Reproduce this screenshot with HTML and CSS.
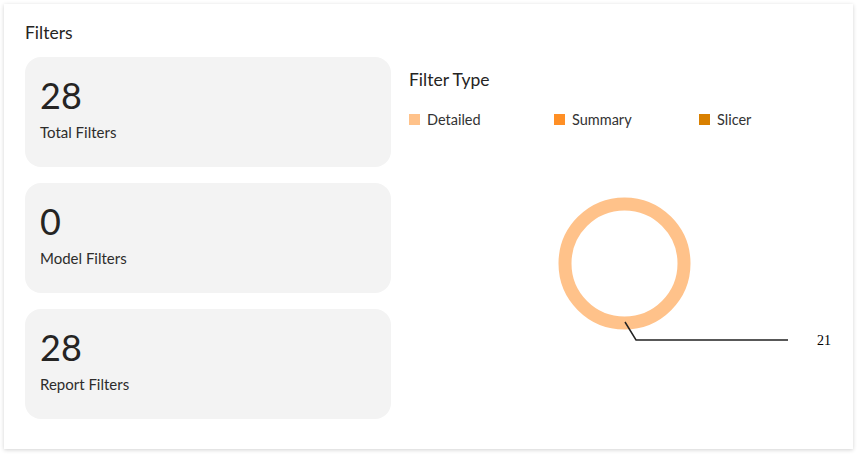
FILE: index.html
```html
<!DOCTYPE html>
<html>
<head>
<meta charset="utf-8">
<link rel="stylesheet" href="styles.css">
</head>
<body>
<div class="panel">
  <h2 class="panel-title">Filters</h2>
  <div class="panel-body">
    <div class="stats">
      <div class="stat">
        <div class="stat-value">28</div>
        <div class="stat-label">Total Filters</div>
      </div>
      <div class="stat">
        <div class="stat-value">0</div>
        <div class="stat-label">Model Filters</div>
      </div>
      <div class="stat">
        <div class="stat-value">28</div>
        <div class="stat-label">Report Filters</div>
      </div>
    </div>
    <div class="chart">
      <div class="chart-title">Filter Type</div>
      <div class="legend">
        <div class="legend-item"><span class="swatch detailed"></span>Detailed</div>
        <div class="legend-item"><span class="swatch summary"></span>Summary</div>
        <div class="legend-item"><span class="swatch slicer"></span>Slicer</div>
      </div>
      <svg class="donut" width="444" height="270" viewBox="0 0 444 270">
        <circle cx="215.5" cy="113.5" r="59.5" fill="none" stroke="#ffc28a" stroke-width="13"/>
        <polyline points="216,172 227,190 379,190" fill="none" stroke="#222" stroke-width="1.5"/>
        <text x="408" y="195" class="donut-label">21</text>
      </svg>
    </div>
  </div>
</div>
</body>
</html>
```
FILE: styles.css
```css
html, body {
  margin: 0;
  padding: 0;
  background: #ffffff;
}
body {
  padding: 4px 10px 10px 4px;
  font-family: "Lato", "Open Sans", sans-serif;
  color: #252423;
}
.panel {
  width: 849px;
  height: 445px;
  box-sizing: border-box;
  background: #fff;
  box-shadow: 0 1px 4px rgba(0,0,0,0.18);
  padding: 17px 0 0 21px;
}
.panel-title {
  margin: 0;
  font-size: 17.5px;
  font-weight: 400;
  line-height: 24px;
  color: #252423;
}
.panel-body {
  display: flex;
  gap: 18px;
  margin-top: 12px;
}
.stats {
  display: flex;
  flex-direction: column;
  gap: 16px;
  width: 367px;
}
.stat {
  height: 110px;
  box-sizing: border-box;
  background: #f3f3f3;
  border-radius: 16px;
  padding: 18px 16px 0 15px;
}
.stat-value {
  font-size: 36px;
  line-height: 40px;
  color: #252423;
}
.stat-label {
  font-size: 15px;
  line-height: 20px;
  margin-top: 7px;
  color: #2d2c2b;
}
.chart {
  flex: 1;
  padding-top: 11px;
}
.chart-title {
  font-size: 17.5px;
  line-height: 24px;
  color: #252423;
}
.legend {
  display: flex;
  margin-top: 17px;
  height: 20px;
  align-items: center;
}
.legend-item {
  width: 145px;
  display: flex;
  align-items: center;
  font-size: 14.5px;
  color: #333;
}
.swatch {
  width: 11px;
  height: 11px;
  margin-right: 7px;
  display: inline-block;
}
.detailed { background: #ffc28a; }
.summary { background: #ff8f25; }
.slicer { background: #d98000; }
.donut {
  display: block;
  margin-top: 21px;
}
.donut-label {
  font-family: "Liberation Serif", serif;
  font-size: 14px;
  fill: #000;
}
```
